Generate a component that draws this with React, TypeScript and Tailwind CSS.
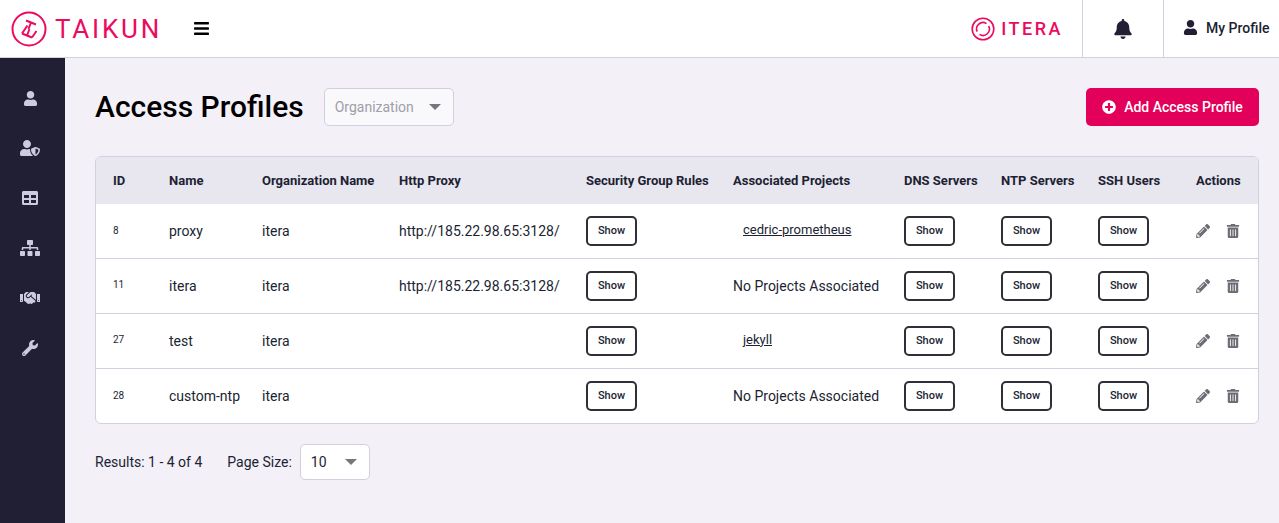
import React from 'react';
import {
    FaBars,
    FaBell,
    FaHandshake,
    FaPencilAlt,
    FaPlusCircle,
    FaSitemap,
    FaTable,
    FaTrashAlt,
    FaUser,
    FaUserShield,
    FaWrench,
} from 'react-icons/fa';

interface Profile {
    id: number;
    name: string;
    proxy: string;
    project: string | null;
}

const profiles: Profile[] = [
    { id: 8, name: 'proxy', proxy: 'http://185.22.98.65:3128/', project: 'cedric-prometheus' },
    { id: 11, name: 'itera', proxy: 'http://185.22.98.65:3128/', project: null },
    { id: 27, name: 'test', proxy: '', project: 'jekyll' },
    { id: 28, name: 'custom-ntp', proxy: '', project: null },
];

const headers = [
    { label: 'ID', width: 'w-[73px] pl-[17px]' },
    { label: 'Name', width: 'w-[93px]' },
    { label: 'Organization Name', width: 'w-[137px]' },
    { label: 'Http Proxy', width: 'w-[187px]' },
    { label: 'Security Group Rules', width: 'w-[147px]' },
    { label: 'Associated Projects', width: 'w-[171px]' },
    { label: 'DNS Servers', width: 'w-[97px]' },
    { label: 'NTP Servers', width: 'w-[97px]' },
    { label: 'SSH Users', width: 'w-[98px]' },
    { label: 'Actions', width: '' },
];

const ShowButton = () => (
    <button className="flex h-[30px] w-[51px] items-center justify-center rounded-[5px] border-2 border-[#2f2f37] bg-white text-[11px] font-medium text-[#201f33]">
        Show
    </button>
);

const Caret = () => (
    <svg className="h-[6px] w-3 fill-[#77767f]" viewBox="0 0 12 6">
        <path d="M0 0 H12 L6 6 Z" />
    </svg>
);

const TaikunLogo = () => (
    <svg className="h-9 w-9" viewBox="0 0 36 36" fill="none" stroke="#ec0a5e" strokeWidth="2">
        <circle cx="18" cy="18" r="16.5" />
        <path d="M15 9.5 L25 13.5 M20 11.5 L17.5 18 M11 22.5 L21 26.5 M16 24.5 L18.5 18 M11 22.5 L16.5 14.5 M21 26.5 L25.5 20" />
    </svg>
);

const IteraLogo = () => (
    <svg className="h-6 w-6" viewBox="0 0 24 24" fill="none" stroke="#ec0a5e" strokeWidth="1.6">
        <circle cx="12" cy="12" r="10.8" />
        <path d="M15.5 6.6 A6.4 6.4 0 0 0 6.2 14.7 M8.5 17.4 A6.4 6.4 0 0 0 17.6 9" />
    </svg>
);

const App: React.FC = () => {
    return (
        <div className="flex h-[523px] flex-col overflow-hidden bg-[#f3f0f8] font-['Roboto',sans-serif] text-[#201f33]">
            <header className="flex h-[58px] items-center border-b border-[#d2cfdf] bg-white">
                <div className="ml-[11px]">
                    <TaikunLogo />
                </div>
                <span className="ml-[8px] text-[26px] leading-none tracking-[2.8px] text-[#ec0a5e]">TAIKUN</span>
                <FaBars className="ml-[31px] text-[17px] text-black" />
                <div className="ml-auto flex h-full items-center">
                    <IteraLogo />
                    <span className="ml-[6px] mr-[19px] text-[18px] font-medium leading-none tracking-[2.5px] text-[#ec0a5e]">ITERA</span>
                    <div className="flex h-full w-[81px] items-center justify-center border-l border-[#d2cfdf]">
                        <FaBell className="text-[20px]" />
                    </div>
                    <div className="flex h-full w-[116px] items-center border-l border-[#d2cfdf] pb-[2px] pl-[19px]">
                        <FaUser className="text-[15px]" />
                        <span className="ml-2 text-sm font-medium">My Profile</span>
                    </div>
                </div>
            </header>

            <div className="flex min-h-0 flex-1">
                <aside className="flex w-[65px] flex-col items-center gap-[34px] bg-[#201f33] pr-[5px] pt-[32px] text-[#cdcbe0]">
                    <div className="flex h-4 items-center"><FaUser className="text-[15px]" /></div>
                    <div className="flex h-4 items-center"><FaUserShield className="text-[20px]" /></div>
                    <div className="flex h-4 items-center"><FaTable className="text-[16px]" /></div>
                    <div className="flex h-4 items-center"><FaSitemap className="text-[20px]" /></div>
                    <div className="flex h-4 items-center"><FaHandshake className="text-[20px]" /></div>
                    <div className="flex h-4 items-center"><FaWrench className="text-[16px]" /></div>
                </aside>

                <main className="flex-1 pl-[30px] pr-[20px] pt-[30px]">
                    <div className="flex h-[38px] items-center">
                        <h1 className="text-[30px] font-medium leading-none text-black">Access Profiles</h1>
                        <div className="ml-5 flex h-[38px] w-[130px] items-center justify-between rounded-[5px] border border-[#d2cfdf] bg-[#f9f8fb] pl-[10px] pr-[12px] text-sm text-[#a09fa9]">
                            Organization
                            <Caret />
                        </div>
                        <button className="ml-auto flex h-[38px] w-[173px] items-center justify-center gap-2 rounded-[5px] bg-[#e3005a] text-sm font-medium text-white">
                            <FaPlusCircle className="text-[14px]" />
                            Add Access Profile
                        </button>
                    </div>

                    <div className="mt-[30px] overflow-hidden rounded-[6px] border border-[#d2cfdf] bg-white">
                        <table className="w-full table-fixed border-collapse text-left">
                            <thead>
                                <tr className="h-[47px] bg-[#e8e6ee] text-[13px] font-bold">
                                    {headers.map((h) => (
                                        <th key={h.label} className={`font-bold ${h.width}`}>
                                            {h.label}
                                        </th>
                                    ))}
                                </tr>
                            </thead>
                            <tbody className="text-sm">
                                {profiles.map((p) => (
                                    <tr key={p.id} className="h-[55px] border-t border-[#d2cfdf] first:h-[54px] first:border-t-0">
                                        <td className="pl-[17px] text-[10px]">{p.id}</td>
                                        <td>{p.name}</td>
                                        <td>itera</td>
                                        <td>{p.proxy}</td>
                                        <td><ShowButton /></td>
                                        <td>
                                            {p.project ? (
                                                <a className="mb-[1px] ml-[10px] block w-fit text-[13px] underline">{p.project}</a>
                                            ) : (
                                                'No Projects Associated'
                                            )}
                                        </td>
                                        <td><ShowButton /></td>
                                        <td><ShowButton /></td>
                                        <td><ShowButton /></td>
                                        <td>
                                            <div className="flex items-center gap-4 text-[#6d6c75]">
                                                <FaPencilAlt className="text-[14px]" />
                                                <FaTrashAlt className="text-[14px]" />
                                            </div>
                                        </td>
                                    </tr>
                                ))}
                            </tbody>
                        </table>
                    </div>

                    <div className="mt-5 flex items-center text-sm">
                        <span>Results: 1 - 4 of 4</span>
                        <span className="ml-[25px]">Page Size:</span>
                        <div className="ml-2 flex h-9 w-[70px] items-center justify-between rounded-[5px] border border-[#d2cfdf] bg-white pl-[10px] pr-[12px]">
                            10
                            <Caret />
                        </div>
                    </div>
                </main>
            </div>
        </div>
    );
};

export default App;
